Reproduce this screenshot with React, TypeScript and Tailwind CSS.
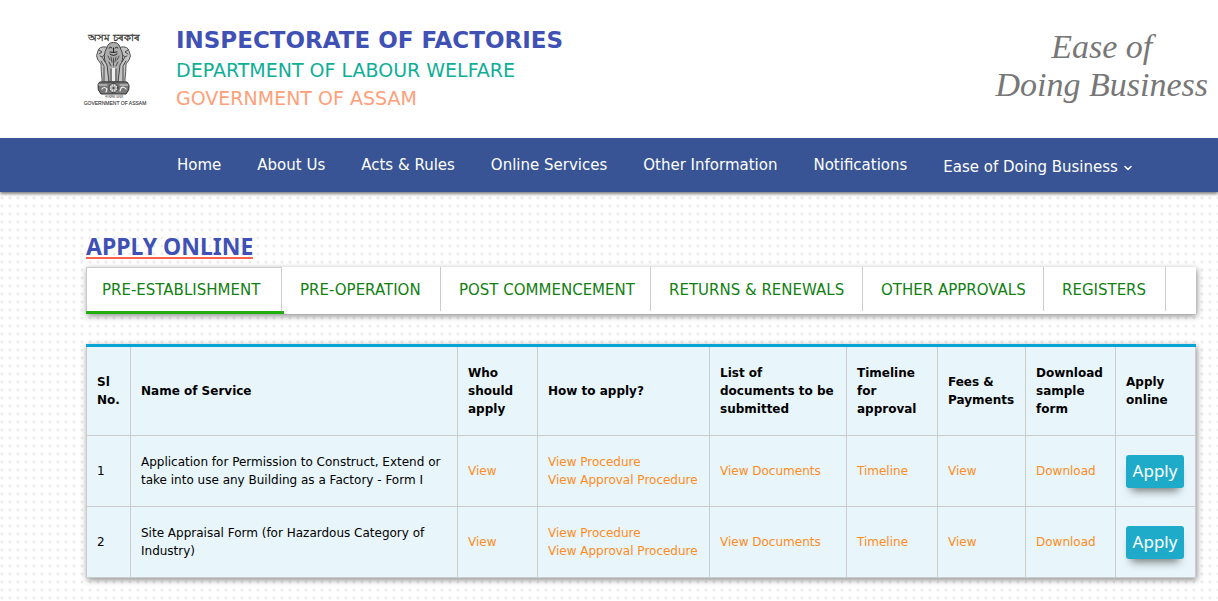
import { ChevronDown } from 'lucide-react';

const menu = ['Home', 'About Us', 'Acts & Rules', 'Online Services', 'Other Information', 'Notifications'];

const tabs = [
  { name: 'PRE-ESTABLISHMENT', width: 'w-[198px]' },
  { name: 'PRE-OPERATION', width: 'w-[159px]' },
  { name: 'POST COMMENCEMENT', width: 'w-[210px]' },
  { name: 'RETURNS & RENEWALS', width: 'w-[212px]' },
  { name: 'OTHER APPROVALS', width: 'w-[181px]' },
  { name: 'REGISTERS', width: 'w-[122px]' },
];

const columns = [
  { title: 'Sl No.', width: 'w-[44px]' },
  { title: 'Name of Service', width: '' },
  { title: 'Who should apply', width: 'w-[80px]' },
  { title: 'How to apply?', width: 'w-[172px]' },
  { title: 'List of documents to be submitted', width: 'w-[137px]' },
  { title: 'Timeline for approval', width: 'w-[91px]' },
  { title: 'Fees & Payments', width: 'w-[88px]' },
  { title: 'Download sample form', width: 'w-[90px]' },
  { title: 'Apply online', width: 'w-[80px]' },
];

const services = [
  {
    name: 'Application for Permission to Construct, Extend or take into use any Building as a Factory - Form I',
    links: [['View'], ['View Procedure', 'View Approval Procedure'], ['View Documents'], ['Timeline'], ['View'], ['Download']],
  },
  {
    name: 'Site Appraisal Form (for Hazardous Category of Industry)',
    links: [['View'], ['View Procedure', 'View Approval Procedure'], ['View Documents'], ['Timeline'], ['View'], ['Download']],
  },
];

function Emblem() {
  return (
    <svg viewBox="0 0 66 78" className="h-[78px] w-[66px] shrink-0" fill="none" strokeLinecap="round" role="img">
      <title>Government of Assam</title>
      <text x="32" y="13" textAnchor="middle" fontSize="10" fill="#333" stroke="#333" strokeWidth="0.300">অসম চৰকাৰ</text>
      {/* side lions */}
      <path d="M24 19Q17 18 16 23Q13 28 16 32L19 36Q19 43 20 51L20 54H28V24Z" fill="#c4c4c4" stroke="#555" strokeWidth="1" />
      <path d="M39 19Q46 18 47 23Q50 28 47 32L44 36Q44 43 43 51L43 54H35V24Z" fill="#c4c4c4" stroke="#555" strokeWidth="1" />
      <path d="M17 22l3 2-3 2M46 22l-3 2 3 2M20 29l3 5M43 29l-3 5M19 33l3 5M44 33l-3 5M22 39v14M41 39v14M18 28q3 2 5-2M45 28q-3 2-5-2" stroke="#444" strokeWidth="1" />
      {/* centre lion */}
      <path d="M26 17Q28 14 31.500 14.500Q35 14 37 17L40 24Q42 32 38 37L36 54H27L25 37Q21 32 23 24Z" fill="#adadad" stroke="#444" strokeWidth="1" />
      <path d="M27 20q2-2 3 0M33 20q2-2 3 0M31.500 20v4M28 26q3.500 3 7 0M28 24q3 1 7 0" stroke="#222" strokeWidth="1" />
      <path d="M26 28l2 4M37 28l-2 4M29 29l1 5M34 29l-1 5M27 34l2 4M36 34l-2 4M31.500 30v8M29 41v12M34 41v12" stroke="#444" strokeWidth="0.900" />
      <path d="M30 40h3v13h-3z" fill="#eee" />
      {/* abacus with the wheel */}
      <path d="M18 54h27l2 3q1 5-3 9H19q-4-4-3-9z" fill="#777" stroke="#333" strokeWidth="1" />
      <path d="M17 57h8M38 57h8" stroke="#ddd" strokeWidth="1" />
      <path d="M20 61q2-3 5 0l-1 3M38 63l1-3q3-2 5 1" stroke="#eee" strokeWidth="1.200" />
      <circle cx="31.500" cy="60" r="4.500" fill="#ddd" stroke="#333" strokeWidth="1" />
      <circle cx="31.500" cy="60" r="1" fill="#333" />
      <path d="M31.500 56v8M27.500 60h8M28.700 57.200l5.600 5.600M34.300 57.200l-5.600 5.600" stroke="#555" strokeWidth="0.500" />
      <text x="32" y="70" textAnchor="middle" fontSize="4" fill="#333">सत्यमेव जयते</text>
      <text x="33" y="77" textAnchor="middle" fontSize="5" fill="#333" stroke="#333" strokeWidth="0.100" className="font-['Liberation_Sans',sans-serif]">
        GOVERNMENT OF ASSAM
      </text>
    </svg>
  );
}

function Header() {
  return (
    <header className="flex items-start justify-between bg-white pt-6 pr-[10px] pb-[26px] pl-[82px]">
      <div className="flex gap-7">
        <div className="pt-1">
          <Emblem />
        </div>
        <div>
          <h1 className="text-[23px] leading-8 font-bold text-[#3f51b5]">INSPECTORATE OF FACTORIES</h1>
          <p className="text-[19px] leading-7 text-[#0fae96]">DEPARTMENT OF LABOUR WELFARE</p>
          <p className="text-[19px] leading-7 text-[#ffa07a]">GOVERNMENT OF ASSAM</p>
        </div>
      </div>
      <p className="flex flex-col items-center pt-1 font-['Liberation_Serif',serif] text-[34px] leading-[38px] text-[#777] italic">
        <span>Ease of</span>
        <span>Doing Business</span>
      </p>
    </header>
  );
}

function ServiceTable() {
  return (
    <div className="mt-[30px] border-t-[3px] border-[#06a3d3] bg-[#e8f5fa] shadow-[1px_2px_6px_rgba(0,0,0,0.45)]">
      <table className="w-full table-fixed border-collapse text-[12px] leading-[18px] text-black">
        <thead>
          <tr>
            {columns.map((c) => (
              <th key={c.title} className={`border border-t-0 border-[#ccc] px-[10px] py-[17px] text-left ${c.width}`}>
                {c.title}
              </th>
            ))}
          </tr>
        </thead>
        <tbody>
          {services.map((s, i) => (
            <tr key={s.name} className="h-[71px]">
              <td className="border border-[#ccc] px-[10px]">{i + 1}</td>
              <td className="border border-[#ccc] px-[10px]">{s.name}</td>
              {s.links.map((group, n) => (
                <td key={n} className="border border-[#ccc] px-[10px] whitespace-nowrap">
                  {group.map((link) => (
                    <a key={link} href="#" className="block text-[#ff8c1a]">{link}</a>
                  ))}
                </td>
              ))}
              <td className="border border-[#ccc] px-[10px]">
                <button
                  type="button"
                  className="block h-[33px] w-[58px] rounded-[3px] bg-[#1eabca] font-['Noto_Sans',sans-serif] text-[17px] text-white shadow-[0_8px_8px_-5px_rgba(0,0,0,0.5)]"
                >
                  Apply
                </button>
              </td>
            </tr>
          ))}
        </tbody>
      </table>
    </div>
  );
}

export default function App() {
  return (
    <div className="flex min-h-screen flex-col bg-white font-['DejaVu_Sans',Verdana,sans-serif]">
      <Header />
      <nav className="relative flex h-[54px] items-center gap-9 border-t border-[#3b5998] bg-[#385494] pl-[177px] text-[15px] whitespace-nowrap text-white shadow-[0_2px_3px_rgba(0,0,0,0.5)]">
        {menu.map((item) => (
          <a key={item} href="#">{item}</a>
        ))}
        <a href="#" className="flex items-center gap-1 pt-1">
          Ease of Doing Business <ChevronDown size={12} strokeWidth={3} />
        </a>
      </nav>
      <main className="grow bg-[radial-gradient(circle_at_2px_6px,#ededed_1px,transparent_2px)] bg-[size:8px_8px] pt-[44px] pr-[22px] pb-6 pl-[86px]">
        <h2 className="flex font-['Noto_Sans',sans-serif] text-[23px] leading-[21px] font-bold text-[#3f51b5]">
          <span className="border-b-2 border-[#ff6347]">APPLY ONLINE</span>
        </h2>
        <ul className="mt-2 flex h-[47px] bg-white text-[15px] whitespace-nowrap text-[#128012] shadow-[1px_2px_6px_rgba(0,0,0,0.45)]">
          {tabs.map((tab, i) => (
            <li
              key={tab.name}
              className={`border-b-[3px] pr-[2px] ${i === 0 ? 'border-[#1fae0b]' : 'border-transparent'} ${tab.width}`}
            >
              <a
                href="#"
                className={`flex h-full items-center border-r border-[#ccc] pt-[2px] ${i === 0 ? 'border-t border-l pl-[15px]' : 'pl-4'}`}
              >
                {tab.name}
              </a>
            </li>
          ))}
        </ul>
        <ServiceTable />
      </main>
    </div>
  );
}
